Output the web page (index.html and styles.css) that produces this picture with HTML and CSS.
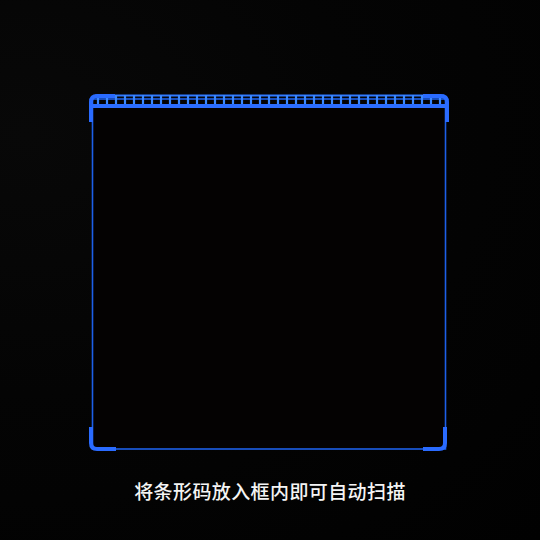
FILE: index.html
```html
<!DOCTYPE html>
<html lang="zh">
<head>
<meta charset="utf-8">
<link rel="stylesheet" href="styles.css">
</head>
<body>
<main class="scanner">
  <svg class="frame" width="362" height="362" viewBox="0 0 362 362" xmlns="http://www.w3.org/2000/svg">
    <rect class="outline" x="3.5" y="6" width="353" height="350" />
    <g class="ruler">
      <line x1="6" y1="2.5" x2="355" y2="2.5" />
    </g>
    <g class="ticks" id="ticks"></g>
    <rect class="bar" x="3" y="11" width="354" height="4" />
    <path class="corner" d="M2,29 V9 Q2,3 8,3 H26" />
    <path class="corner" d="M334,3 H352 Q358,3 358,9 V29" />
    <path class="corner" d="M2,334 V350 Q2,356 8,356 H27" />
    <path class="corner" d="M334,356 H350 Q356,356 356,350 V334" />
  </svg>
  <p class="hint">将条形码放入框内即可自动扫描</p>
</main>
<script src="app.js"></script>
</body>
</html>
```
FILE: app.js
```js
var g = document.getElementById('ticks');
var ns = 'http://www.w3.org/2000/svg';
for (var x = 9; x <= 354; x += 9) {
  var l = document.createElementNS(ns, 'line');
  l.setAttribute('x1', x);
  l.setAttribute('x2', x);
  l.setAttribute('y1', 2);
  l.setAttribute('y2', 12);
  g.appendChild(l);
}
```
FILE: styles.css
```css
html, body {
  margin: 0;
  padding: 0;
  width: 540px;
  height: 540px;
  overflow: hidden;
}
body {
  background: radial-gradient(ellipse at 5% 25%, #080808 0%, #040404 45%, #010101 100%);
  font-family: "Noto Sans CJK SC", "Noto Sans", sans-serif;
}
.scanner {
  display: flex;
  flex-direction: column;
  align-items: center;
  padding-top: 93px;
}
.frame {
  display: block;
}
.outline {
  fill: #040202;
  stroke: #1d5fe8;
  stroke-width: 1.6;
}
.ruler line {
  stroke: #3079ff;
  stroke-width: 2;
}
.ticks line {
  stroke: #3a88ff;
  stroke-width: 2.2;
}
.bar {
  fill: #2c6dff;
}
.corner {
  fill: none;
  stroke: #2a6bff;
  stroke-width: 4;
  stroke-linecap: butt;
}
.hint {
  margin: 24px 0 0;
  color: #f4f4f4;
  font-size: 19px;
  font-weight: 500;
  line-height: 24px;
  letter-spacing: 0.4px;
}
```
